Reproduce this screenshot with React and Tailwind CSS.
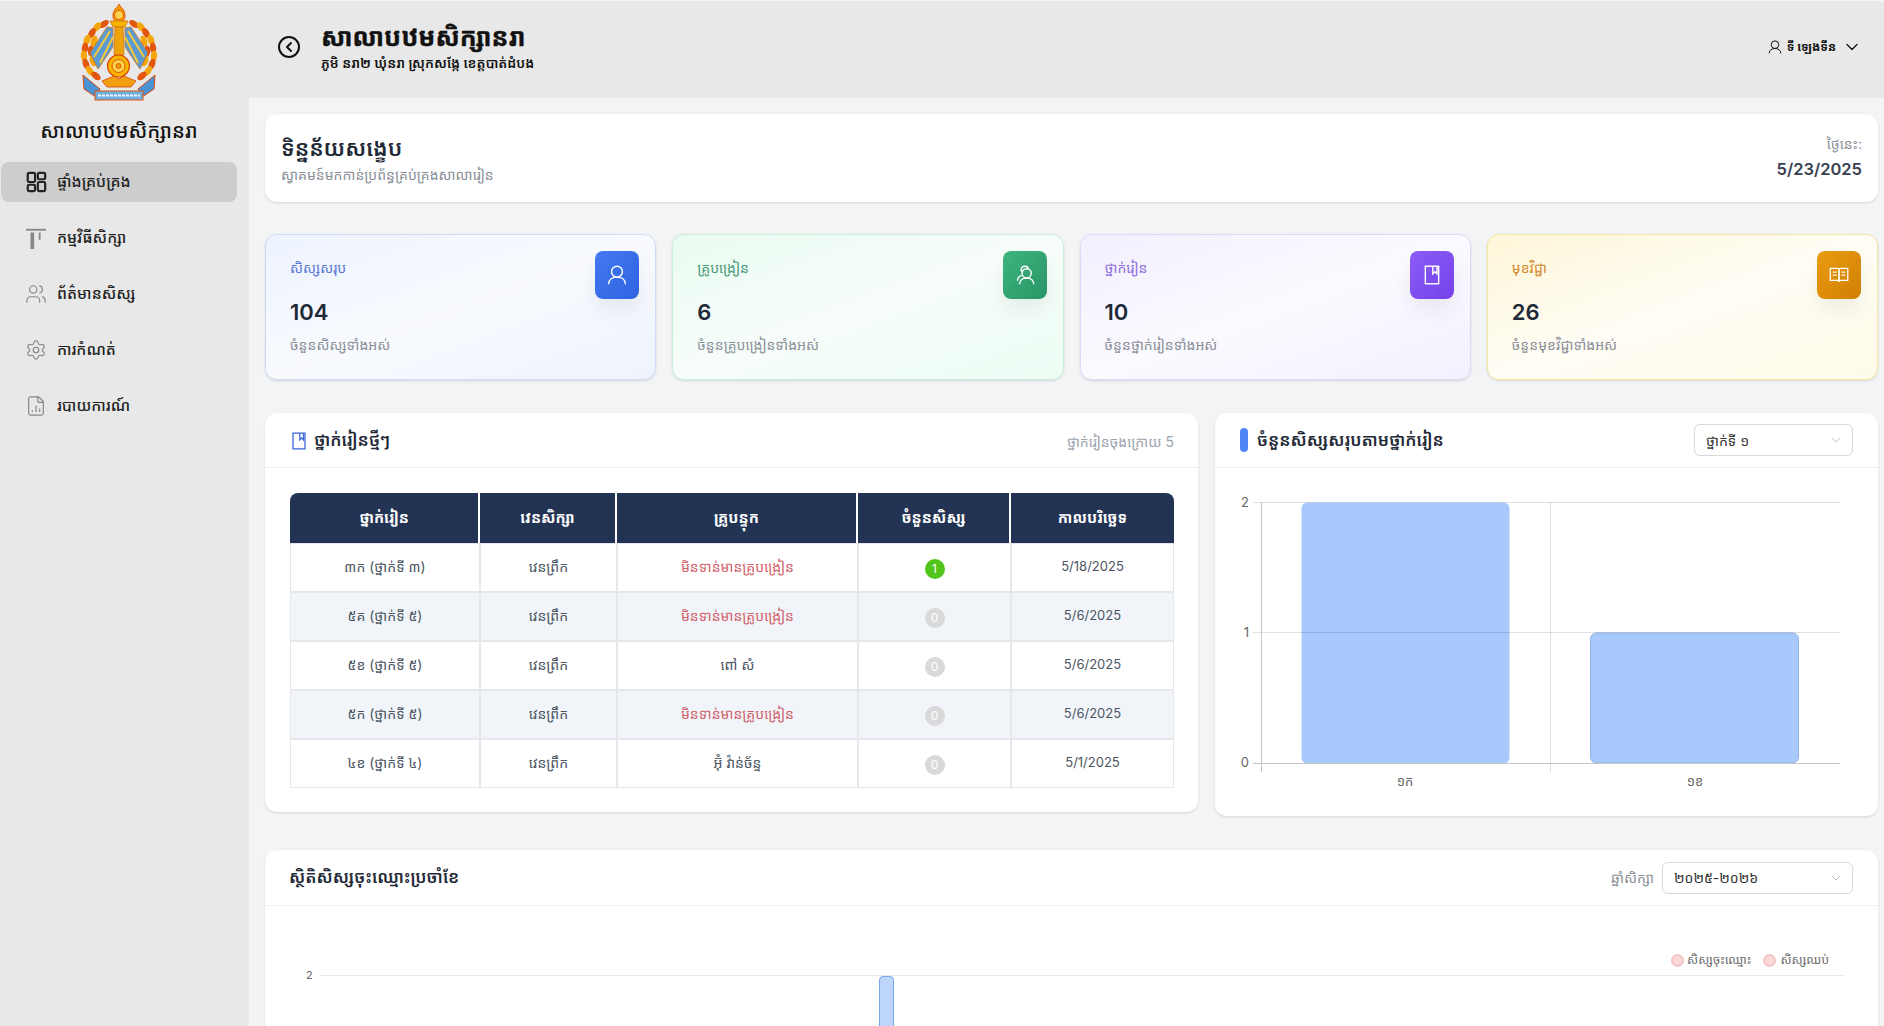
import { useState } from "react";
import { ChevronDown, CircleChevronLeft, Users, Settings, FileChartColumn } from "lucide-react";

const font = "font-['Inter','Noto_Sans_Khmer','Noto_Sans',sans-serif]";

function DashGlyph(props) {
  return (
    <svg viewBox="0 0 24 24" fill="none" stroke="currentColor" strokeWidth="2.4" {...props}>
      <rect x="3" y="2" width="8" height="10" rx="1.5" />
      <rect x="3" y="15" width="8" height="7" rx="1.5" />
      <rect x="14" y="2" width="8" height="7" rx="1.5" />
      <rect x="14" y="12" width="8" height="10" rx="1.5" />
    </svg>
  );
}

function BoardGlyph(props) {
  return (
    <svg viewBox="0 0 24 24" fill="none" stroke="currentColor" {...props}>
      <path d="M1 3h22" strokeWidth="2" />
      <path d="M8 6v18" strokeWidth="4" />
      <path d="M16 6v8" strokeWidth="2" />
    </svg>
  );
}

function UserGlyph(props) {
  return (
    <svg viewBox="0 0 24 24" fill="none" stroke="currentColor" strokeWidth="1.7" {...props}>
      <circle cx="12" cy="8" r="6.5" />
      <path d="M2 23c0-5.5 4.5-8.5 10-8.5s10 3 10 8.5" />
    </svg>
  );
}

function TeacherGlyph(props) {
  return (
    <svg viewBox="0 0 24 24" fill="none" stroke="currentColor" strokeWidth="1.7" {...props}>
      <circle cx="14" cy="10" r="5.5" />
      <path d="M5.5 23c0-4.8 3.8-7.5 8.5-7.5s8.5 2.7 8.5 7.5" />
      <path d="M8.5 7.5C6.5 6.500 7 2 11 1.500c2.500-.3 4.500 1 5 3" />
      <path d="M8 12.500c-3 1-5 3.500-5 6.500" />
    </svg>
  );
}

function BookGlyph(props) {
  return (
    <svg viewBox="0 0 24 24" fill="none" stroke="currentColor" strokeWidth="1.7" {...props}>
      <rect x="4" y="1.500" width="16" height="21" />
      <path d="M13 1.500v9l2.500-2.500 2.500 2.500v-9" />
    </svg>
  );
}

function OpenBookGlyph(props) {
  return (
    <svg viewBox="0 0 24 24" fill="none" stroke="currentColor" strokeWidth="1.5" {...props}>
      <path d="M1.500 4h8.500c1.200 0 2 .8 2 2v14c0-1-.8-1.500-2-1.500H1.500z" />
      <path d="M22.500 4H14c-1.200 0-2 .8-2 2v14c0-1 .8-1.500 2-1.500h8.500z" />
      <path d="M4.500 8.500h4.500M4.500 12h4.500M15 8.500h4.500M15 12h4.500" />
    </svg>
  );
}

const navItems = [
  { label: "ផ្ទាំងគ្រប់គ្រង", icon: DashGlyph, active: true },
  { label: "កម្មវិធីសិក្សា", icon: BoardGlyph },
  { label: "ព័ត៌មានសិស្ស", icon: Users },
  { label: "ការកំណត់", icon: Settings },
  { label: "របាយការណ៍", icon: FileChartColumn },
];

const statCards = [
  { title: "សិស្សសរុប", value: "104", note: "ចំនួនសិស្សទាំងអស់", icon: UserGlyph, card: "border-[#cfdcf6] from-[#edf3fe] via-[#f8fafe] to-[#eef3fd]", tile: "from-[#4379f2] to-[#2f63e0]", titleColor: "text-[#5a78d6]" },
  { title: "គ្រូបង្រៀន", value: "6", note: "ចំនួនគ្រូបង្រៀនទាំងអស់", icon: TeacherGlyph, card: "border-[#c9efda] from-[#e9fbf1] via-[#f7fdfa] to-[#ecfdf4]", tile: "from-[#3db57f] to-[#2a9565]", titleColor: "text-[#4b9a78]" },
  { title: "ថ្នាក់រៀន", value: "10", note: "ចំនួនថ្នាក់រៀនទាំងអស់", icon: BookGlyph, card: "border-[#e0d8f9] from-[#f3effe] via-[#fbfaff] to-[#f4f0fe]", tile: "from-[#8b5cf6] to-[#7540ea]", titleColor: "text-[#8f6fe0]" },
  { title: "មុខវិជ្ជា", value: "26", note: "ចំនួនមុខវិជ្ជាទាំងអស់", icon: OpenBookGlyph, card: "border-[#f8e7a0] from-[#fef6d8] via-[#fffdf5] to-[#fffbe9]", tile: "from-[#ea9c10] to-[#d07f04]", titleColor: "text-[#cf8a2c]" },
];

const rows = [
  { name: "៣ក (ថ្នាក់ទី ៣)", teacher: "មិនទាន់មានគ្រូបង្រៀន", count: 1, date: "5/18/2025" },
  { name: "៥គ (ថ្នាក់ទី ៥)", teacher: "មិនទាន់មានគ្រូបង្រៀន", count: 0, date: "5/6/2025" },
  { name: "៥ខ (ថ្នាក់ទី ៥)", teacher: "ពៅ សំ", count: 0, date: "5/6/2025" },
  { name: "៥ក (ថ្នាក់ទី ៥)", teacher: "មិនទាន់មានគ្រូបង្រៀន", count: 0, date: "5/6/2025" },
  { name: "៤ខ (ថ្នាក់ទី ៤)", teacher: "អ៊ុំ វ៉ាន់ច័ន្ទ", count: 0, date: "5/1/2025" },
];

// wreath leaves on the left side, mirrored around x=49 for the right
const leaves = [
  [34, 23, -35], [27, 26, -50], [22, 32, -60], [17, 39, -70], [15, 47, -85],
  [14, 55, 85], [16, 63, 70], [20, 70, 55], [26, 75, 40], [24, 40, -70], [21, 50, 90], [23, 60, 70],
];

function Crest() {
  return (
    <svg viewBox="0 0 100 105" className="h-[105px] w-[100px]">
      {/* wreath */}
      {leaves.map(([x, y, r], i) => (
        <g key={i}>
          <ellipse cx={x} cy={y} rx="5.500" ry="3.200" transform={`rotate(${r} ${x} ${y})`} fill={i % 2 ? "#f4a60c" : "#e2570f"} />
          <ellipse cx={98 - x} cy={y} rx="5.500" ry="3.200" transform={`rotate(${-r} ${98 - x} ${y})`} fill={i % 2 ? "#f4a60c" : "#e2570f"} />
        </g>
      ))}
      {/* rays */}
      <path d="M43 27l-6-1-17 26 8 16 15-22z" fill="#5c9ad2" stroke="#c9711a" strokeWidth=".8" />
      <path d="M55 27l6-1 17 26-8 16-15-22z" fill="#5c9ad2" stroke="#c9711a" strokeWidth=".8" />
      <path d="M40 30L24 56M43 36L30 62M58 30l16 26M55 36l13 26" stroke="#f7c93a" strokeWidth="2" />
      {/* torch */}
      <path d="M49 3c1 3 4 4 5 7 2 4 1 8-1 11H45c-2-3-3-7-1-11 1-3 4-4 5-7z" fill="#f29a00" stroke="#d9480f" strokeWidth=".8" />
      <circle cx="49" cy="14" r="4.500" fill="#fcd34d" stroke="#d9480f" strokeWidth=".8" />
      <path d="M40 20h18l-3 6H43z" fill="#f7b500" stroke="#c9711a" strokeWidth=".8" />
      <path d="M45 26h8l1 28H44z" fill="#eda40a" stroke="#c9711a" strokeWidth=".8" />
      {/* wheel */}
      <circle cx="48.500" cy="65" r="11" fill="#f7b500" stroke="#d9480f" strokeWidth="1.200" />
      <circle cx="48.500" cy="65" r="6.500" fill="#fbd24a" stroke="#d9480f" strokeWidth=".9" />
      <circle cx="48.500" cy="65" r="2.500" fill="#ef9a05" stroke="#d9480f" strokeWidth=".8" />
      <path d="M32 80l12-5 5 3 5-3 12 5-5 6H37z" fill="#f0a010" stroke="#d9480f" strokeWidth=".8" />
      {/* banner */}
      <path d="M13 74l12 10 5 4-4 8-12-8z" fill="#4a94d4" stroke="#d9480f" strokeWidth="1" />
      <path d="M85 74L73 84l-5 4 4 8 12-8z" fill="#4a94d4" stroke="#d9480f" strokeWidth="1" />
      <rect x="25" y="90" width="48" height="9" fill="#6faede" stroke="#e2570f" strokeWidth="1" />
      <path d="M28 94.500h42" stroke="#f2f6fb" strokeWidth="2" strokeDasharray="3 1" />
    </svg>
  );
}

function SelectBox({ label, className }) {
  return (
    <div className={`flex h-[32px] items-center justify-between rounded-md border border-[#d9d9d9] bg-white pl-[11px] pr-[8px] text-[14px] text-[#333] ${className}`}>
      <span>{label}</span>
      <ChevronDown className="h-[16px] w-[16px] text-[#bfbfbf]" strokeWidth={1.5} />
    </div>
  );
}

function Sidebar() {
  return (
    <aside className="flex w-[249px] shrink-0 flex-col bg-[#e8e8e8]">
      <div className="pl-[70px]"><Crest /></div>
      <div className="mt-[10px] w-[238px] text-center text-[20px] font-medium leading-[30px] text-[#111]">សាលាបឋមសិក្សានរា</div>
      <nav className="mt-[16px] flex w-full flex-col gap-[16px] pl-[1px] pr-[12px]">
        {navItems.map((item) =>
          item.active ? (
            <div key={item.label} className="flex h-[40px] items-center gap-[10px] rounded-lg bg-[#cdcdcd] pl-[24px] text-[15.500px] font-medium text-[#222]">
              <item.icon className="h-[22px] w-[22px] text-[#222]" />
              <span>{item.label}</span>
            </div>
          ) : (
            <div key={item.label} className="flex h-[40px] items-center gap-[10px] rounded-lg pl-[24px] text-[15.500px] font-medium text-[#222]">
              <item.icon className="h-[22px] w-[22px] text-[#888]" strokeWidth={1.3} />
              <span>{item.label}</span>
            </div>
          )
        )}
      </nav>
    </aside>
  );
}

function Header() {
  return (
    <header className="flex h-[97px] shrink-0 items-center justify-between bg-[#e8e8e8] pb-[6px] pl-[28px] pr-[22px]">
      <div className="flex items-center gap-[20px]">
        <CircleChevronLeft className="h-[24px] w-[24px] text-[#111]" strokeWidth={2} />
        <div>
          <div className="text-[25px] font-bold leading-[30px] text-[#111] [-webkit-text-stroke:0.4px_#111]">សាលាបឋមសិក្សានរា</div>
          <div className="mt-[2px] text-[13.500px] font-semibold leading-[18px] text-[#111]">ភូមិ នរា២ ឃុំនរា ស្រុកសង្កែ ខេត្តបាត់ដំបង</div>
        </div>
      </div>
      <div className="flex items-center text-[12px] font-bold text-[#111]">
        <UserGlyph className="h-[14px] w-[14px]" />
        <span className="ml-[5px]">ទី ឡេងទីន</span>
        <ChevronDown className="ml-[6px] h-[20px] w-[20px]" strokeWidth={1.5} />
      </div>
    </header>
  );
}

function ClassTable() {
  const cell = "border border-[#e5e7eb] pb-[2px] text-center";
  const body = `${cell} text-[14px]`;
  return (
    <table className="w-full table-fixed border-separate border-spacing-0 overflow-hidden">
      <thead>
        <tr className="h-[50px] bg-[#233354] text-[15px] text-white">
          <th className="w-[190px] rounded-tl-lg border-r-2 border-white font-bold">ថ្នាក់រៀន</th>
          <th className="w-[137px] border-r-2 border-white font-bold">វេនសិក្សា</th>
          <th className="w-[241px] border-r-2 border-white font-bold">គ្រូបន្ទុក</th>
          <th className="w-[153px] border-r-2 border-white font-bold">ចំនួនសិស្ស</th>
          <th className="rounded-tr-lg font-bold">កាលបរិច្ឆេទ</th>
        </tr>
      </thead>
      <tbody className="text-[#4b5563]">
        {rows.map((r, i) => {
          const missing = r.teacher.startsWith("មិន");
          return (
            <tr key={r.name} className={`h-[49px] ${i % 2 ? "bg-[#f1f5fa]" : "bg-white"}`}>
              <td className={body}>{r.name}</td>
              <td className={body}>វេនព្រឹក</td>
              <td className={`${body} ${missing ? "text-[#d0626b]" : ""}`}>{r.teacher}</td>
              <td className={body}>
                <span className={`inline-flex h-[20px] min-w-[20px] translate-y-[1px] items-center justify-center rounded-full text-[12px] text-white ${r.count ? "bg-[#52c41a]" : "bg-[#d9d9d9]"}`}>{r.count}</span>
              </td>
              <td className={`${cell} text-[13px]`}>{r.date}</td>
            </tr>
          );
        })}
      </tbody>
    </table>
  );
}

function BarChart() {
  return (
    <svg viewBox="0 0 660 335" className="h-[335px] w-[660px]">
      <rect x="86.500" y="34.500" width="208" height="261" rx="6" fill="#a8c9fb" />
      <rect x="375.500" y="165" width="208" height="130" rx="6" fill="#a8c9fb" stroke="#8fb2ea" />
      <g stroke="rgba(0,0,0,0.12)">
        <line x1="38" y1="34.500" x2="625" y2="34.500" />
        <line x1="38" y1="164.500" x2="625" y2="164.500" />
        <line x1="335.500" y1="34" x2="335.500" y2="304" />
      </g>
      <g stroke="#c4c6ca">
        <line x1="46.500" y1="34" x2="46.500" y2="304" />
        <line x1="38" y1="295.500" x2="625" y2="295.500" />
      </g>
      <g fill="#666" fontSize="13" textAnchor="end">
        <text x="34" y="39">2</text>
        <text x="34" y="169">1</text>
        <text x="34" y="299">0</text>
      </g>
      <g fill="#666" fontSize="13" textAnchor="middle">
        <text x="190" y="318">១ក</text>
        <text x="480" y="318">១ខ</text>
      </g>
    </svg>
  );
}

export default function App() {
  const [today] = useState("5/23/2025");
  return (
    <div className={`flex h-[1026px] overflow-hidden border-t border-t-[#f4f4f4] bg-[#f3f4f6] ${font}`}>
      <Sidebar />
      <div className="flex min-w-0 flex-1 flex-col">
        <Header />
        <main className="flex flex-col pl-[16px] pr-[6px] pt-[16px]">
          {/* Page title */}
          <div className="flex h-[88px] items-center justify-between rounded-xl bg-white pl-[16px] pr-[16px] shadow-sm">
            <div>
              <h1 className="text-[22px] font-semibold leading-[34px] text-[#1f2937]">ទិន្នន័យសង្ខេប</h1>
              <p className="text-[14px] leading-[20px] text-[#8a8f98]">ស្វាគមន៍មកកាន់ប្រព័ន្ធគ្រប់គ្រងសាលារៀន</p>
            </div>
            <div className="text-right">
              <div className="text-[14px] leading-[22px] text-[#8a8f98]">ថ្ងៃនេះ:</div>
              <div className="text-[16.500px] font-semibold leading-[28px] text-[#374151]">{today}</div>
            </div>
          </div>

          {/* Stat cards */}
          <div className="mt-[32px] grid grid-cols-4 gap-[16px]">
            {statCards.map((c) => (
              <div key={c.title} className={`relative h-[146px] rounded-xl border bg-gradient-to-br pl-[24px] pt-[22px] shadow-sm ${c.card}`}>
                <div className={`text-[14px] leading-[22px] ${c.titleColor}`}>{c.title}</div>
                <div className="mt-[17px] text-[22px] font-semibold leading-[32px] text-[#1f2937]">{c.value}</div>
                <div className="mt-[7px] text-[14px] leading-[20px] text-[#8a8f98]">{c.note}</div>
                <div className={`absolute right-[16px] top-[16px] flex h-[48px] w-[44px] items-center justify-center rounded-lg bg-gradient-to-br text-white shadow-[0_12px_20px_rgba(0,0,0,0.06)] ${c.tile}`}>
                  <c.icon className="h-[20px] w-[20px]" />
                </div>
              </div>
            ))}
          </div>

          {/* Table and bar chart */}
          <div className="mt-[33px] flex items-start gap-[17px]">
            <section className="h-[399px] w-[933px] shrink-0 rounded-xl bg-white shadow-sm">
              <div className="flex h-[55px] items-center justify-between border-b border-[#eef0f3] pl-[25px] pr-[24px]">
                <div className="flex items-center gap-[6px] pt-[2px] text-[17px] font-semibold text-[#1f2937]">
                  <BookGlyph className="h-[18px] w-[18px] text-[#3b66d8]" />
                  <span>ថ្នាក់រៀនថ្មីៗ</span>
                </div>
                <span className="pt-[2px] text-[14px] text-[#9ca3af]">ថ្នាក់រៀនចុងក្រោយ 5</span>
              </div>
              <div className="pl-[25px] pr-[24px] pt-[25px]"><ClassTable /></div>
            </section>
            <section className="h-[403px] min-w-0 flex-1 rounded-xl bg-white shadow-sm">
              <div className="flex h-[55px] items-center justify-between border-b border-[#eef0f3] pl-[25px] pr-[25px]">
                <div className="flex items-center gap-[9px] text-[17px] font-semibold text-[#1f2937]">
                  <span className="h-[24px] w-[8px] rounded-full bg-[#4f86f7]" />
                  <span className="pt-[2px]">ចំនួនសិស្សសរុបតាមថ្នាក់រៀន</span>
                </div>
                <SelectBox label="ថ្នាក់ទី ១" className="w-[159px]" />
              </div>
              <BarChart />
            </section>
          </div>

          {/* Enrolment per month */}
          <section className="mt-[34px] h-[300px] rounded-xl bg-white shadow-sm">
            <div className="flex h-[56px] items-center justify-between border-b border-[#eef0f3] pl-[24px] pr-[25px]">
              <span className="text-[17px] font-semibold text-[#1f2937]">ស្ថិតិសិស្សចុះឈ្មោះប្រចាំខែ</span>
              <div className="flex items-center gap-[8px]">
                <span className="text-[14px] text-[#8a8f98]">ឆ្នាំសិក្សា</span>
                <SelectBox label="២០២៥-២០២៦" className="w-[191px]" />
              </div>
            </div>
            <div className="flex justify-end gap-[12px] pr-[49px] pt-[46px] text-[12px] leading-[16px] text-[#666]">
              <span className="flex items-center gap-[3px]"><span className="h-[13px] w-[13px] rounded-full border-2 border-[#f3c4c4] bg-[#fbd9d9]" />សិស្សចុះឈ្មោះ</span>
              <span className="flex items-center gap-[4px]"><span className="h-[13px] w-[13px] rounded-full border-2 border-[#f3c4c4] bg-[#fbd9d9]" />សិស្សឈប់</span>
            </div>
            <div className="relative ml-[54px] mr-[33px] mt-[7px] border-t border-[#e8e9ec]">
              <span className="absolute -left-[13px] -top-[9px] text-[11px] text-[#666]">2</span>
              <span className="absolute left-[560px] top-0 h-[60px] w-[15px] rounded-t-[4px] border border-[#7aa7f0] bg-[#bfd6fb]" />
            </div>
          </section>
        </main>
      </div>
    </div>
  );
}
